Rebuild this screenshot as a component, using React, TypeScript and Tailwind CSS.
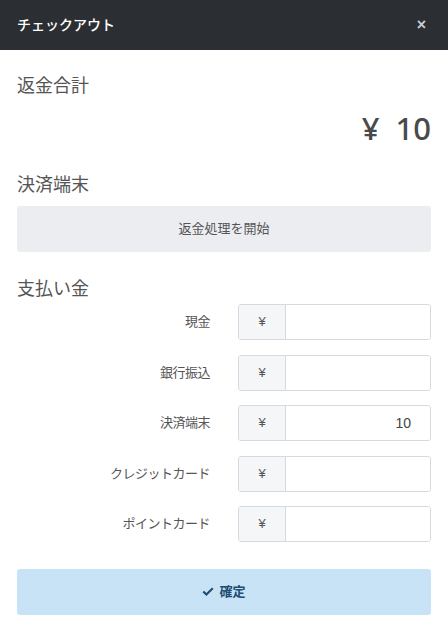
import React from 'react'

const font = { fontFamily: '"Liberation Sans", "Noto Sans CJK JP", sans-serif' }

const methods = [
  { label: '現金', value: '' },
  { label: '銀行振込', value: '' },
  { label: '決済端末', value: '10' },
  { label: 'クレジットカード', value: '' },
  { label: 'ポイントカード', value: '' },
]

function AmountRow({ label, value }: { label: string; value: string }) {
  return (
    <div className="flex items-center h-[36px]">
      <div className="w-[193px] text-right text-[13px] text-[#555] tracking-[-0.5px]">{label}</div>
      <div className="ml-[28px] flex flex-1 h-full border border-[#d5d9e0] rounded-[3px] overflow-hidden">
        <div className="w-[47px] flex items-center justify-center bg-[#f5f6f8] border-r border-[#d5d9e0] text-[13px] text-[#555]">
          ¥
        </div>
        <div className="flex-1 flex items-center justify-end pr-[19px] text-[14px] text-[#444] bg-white">
          {value}
        </div>
      </div>
    </div>
  )
}

export default function App() {
  return (
    <div className="w-[448px] h-[633px] bg-white" style={font}>
      <header className="h-[50px] bg-[#2b2f33] px-[17px] flex items-center justify-between">
        <h1 className="text-[14px] font-medium text-white">チェックアウト</h1>
        <span className="text-[16px] leading-none font-bold text-[#c8ccd0] mr-[5px]">×</span>
      </header>

      <div className="px-[17px]">
        <h2 className="mt-[24px] h-[24px] leading-[24px] text-[18px] text-[#555]">返金合計</h2>
        <div
          className="mt-[15px] h-[30px] leading-[30px] flex justify-end gap-[16px] text-[31px] font-medium text-[#4a4a4a]"
          style={{ fontFamily: '"Noto Sans", "Liberation Sans", sans-serif' }}
        >
          <span>¥</span>
          <span>10</span>
        </div>

        <h2 className="mt-[30px] h-[24px] leading-[24px] text-[18px] text-[#555]">決済端末</h2>
        <button className="mt-[9px] w-full h-[46px] bg-[#ebedf0] rounded-[3px] text-[13px] text-[#555]">
          返金処理を開始
        </button>

        <h2 className="mt-[25px] h-[24px] leading-[24px] text-[18px] text-[#555]">支払い金</h2>
        <div className="mt-[3px] flex flex-col gap-[14.5px]">
          {methods.map((m) => (
            <AmountRow key={m.label} label={m.label} value={m.value} />
          ))}
        </div>

        <button className="mt-[27px] w-full h-[46px] bg-[#c8e2f6] rounded-[3px] flex items-center justify-center gap-[5px] text-[13px] font-bold text-[#1d4f74]">
          <svg width="12" height="10" viewBox="0 0 12 10" fill="currentColor">
            <path d="M0.5 5.2 L2 3.7 L4.4 6.1 L10 0.5 L11.5 2 L4.4 9.1 Z" />
          </svg>
          確定
        </button>
      </div>
    </div>
  )
}
